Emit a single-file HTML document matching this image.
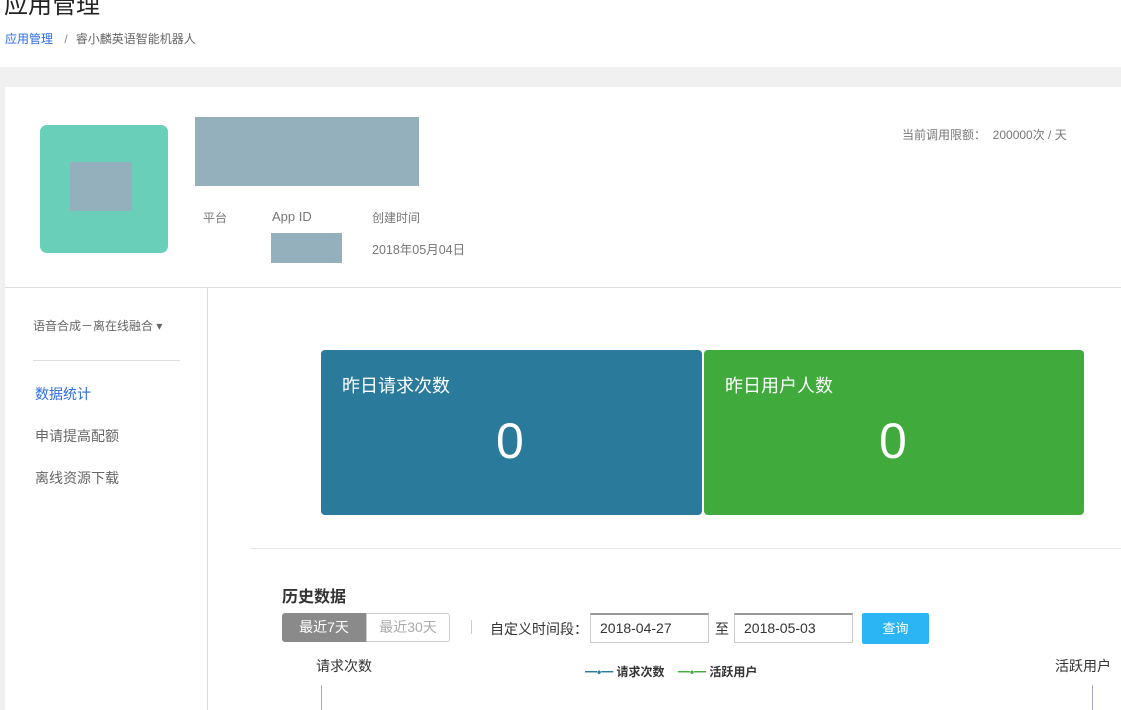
<!DOCTYPE html>
<html><head><meta charset="utf-8"><style>
*{margin:0;padding:0;box-sizing:border-box}
body{width:1121px;height:710px;overflow:hidden;background:#fff;font-family:"Liberation Sans","Noto Sans CJK SC",sans-serif;position:relative;color:#333}
.a{position:absolute;white-space:nowrap}
</style></head><body>
<div class="a" style="left:4px;top:-15px;font-size:24px;color:#222">应用管理</div>
<div class="a" style="left:5px;top:30px;font-size:12px;color:#2b6de0">应用管理 <span style="color:#888;margin:0 8px">/</span><span style="color:#666">睿小麟英语智能机器人</span></div>
<div class="a" style="left:0;top:67px;width:1121px;height:643px;background:#f0f0f0"></div>
<div class="a" style="left:5px;top:87px;width:1116px;height:623px;background:#fff"></div>
<div class="a" style="left:40px;top:125px;width:128px;height:128px;background:#69cfb8;border-radius:7px"></div>
<div class="a" style="left:70px;top:162px;width:62px;height:49px;background:#95b0bd"></div>
<div class="a" style="left:195px;top:117px;width:224px;height:69px;background:#95b0bd"></div>
<div class="a" style="left:203px;top:209px;font-size:12px;color:#777">平台</div>
<div class="a" style="left:272px;top:209px;font-size:13px;color:#777">App ID</div>
<div class="a" style="left:372px;top:209px;font-size:12px;color:#777">创建时间</div>
<div class="a" style="left:271px;top:233px;width:71px;height:30px;background:#95b0bd"></div>
<div class="a" style="left:372px;top:239px;font-size:12.5px;color:#777">2018年05月04日</div>
<div class="a" style="left:902px;top:126px;font-size:12px;color:#777">当前调用限额：&nbsp;&nbsp;200000次 / 天</div>
<div class="a" style="left:5px;top:287px;width:1116px;height:1px;background:#ddd"></div>
<div class="a" style="left:207px;top:288px;width:1px;height:422px;background:#ddd"></div>
<div class="a" style="left:33px;top:317px;font-size:12px;color:#666">语音合成－离在线融合 ▾</div>
<div class="a" style="left:33px;top:360px;width:147px;height:1px;background:#ddd"></div>
<div class="a" style="left:35px;top:384px;font-size:14px;color:#2b6de0">数据统计</div>
<div class="a" style="left:35px;top:426px;font-size:14px;color:#666">申请提高配额</div>
<div class="a" style="left:35px;top:468px;font-size:14px;color:#666">离线资源下载</div>
<div class="a" style="left:321px;top:350px;width:381px;height:165px;background:#2a7a9c;border-radius:4px"></div>
<div class="a" style="left:342px;top:372px;font-size:18px;color:#fff">昨日请求次数</div>
<div class="a" style="left:496px;top:412px;font-size:50px;color:#fff">0</div>
<div class="a" style="left:704px;top:350px;width:380px;height:165px;background:#40aa3c;border-radius:4px"></div>
<div class="a" style="left:725px;top:372px;font-size:18px;color:#fff">昨日用户人数</div>
<div class="a" style="left:879px;top:412px;font-size:50px;color:#fff">0</div>
<div class="a" style="left:250px;top:548px;width:871px;height:1px;background:#e6e6e6"></div>
<div class="a" style="left:282px;top:583px;font-size:16px;font-weight:bold;color:#333">历史数据</div>
<div class="a" style="left:282px;top:613px;width:84px;height:29px;background:#8a8a8a;border-radius:3px 0 0 3px;color:#fff;font-size:14px;line-height:29px;text-align:center">最近7天</div>
<div class="a" style="left:366px;top:613px;width:84px;height:29px;border:1px solid #ccc;border-radius:0 3px 3px 0;color:#aaa;font-size:14px;line-height:27px;text-align:center">最近30天</div>
<div class="a" style="left:471px;top:620px;width:1px;height:14px;background:#ccc"></div>
<div class="a" style="left:490px;top:619px;font-size:14px;color:#333">自定义时间段：</div>
<div class="a" style="left:590px;top:613px;width:119px;height:30px;border:1px solid #ccc;border-top:2px solid #999;font-size:14px;padding:5px 9px">2018-04-27</div>
<div class="a" style="left:715px;top:619px;font-size:14px">至</div>
<div class="a" style="left:734px;top:613px;width:119px;height:30px;border:1px solid #ccc;border-top:2px solid #999;font-size:14px;padding:5px 9px">2018-05-03</div>
<div class="a" style="left:862px;top:613px;width:67px;height:31px;background:#2cb5f5;border-radius:2px;color:#fff;font-size:13px;line-height:31px;text-align:center">查询</div>
<div class="a" style="left:316px;top:656px;font-size:14px">请求次数</div>
<div class="a" style="left:1055px;top:656px;font-size:14px">活跃用户</div>
<div class="a" style="left:585px;top:663px;font-size:12px;font-weight:bold"><span style="color:#2a7a9c">━•━</span> 请求次数 &nbsp;&nbsp;&nbsp;<span style="color:#40aa3c">━•━</span> 活跃用户</div>
<div class="a" style="left:321px;top:685px;width:1px;height:25px;background:#aab"></div>
<div class="a" style="left:1092px;top:685px;width:1px;height:25px;background:#aab"></div>
</body></html>
